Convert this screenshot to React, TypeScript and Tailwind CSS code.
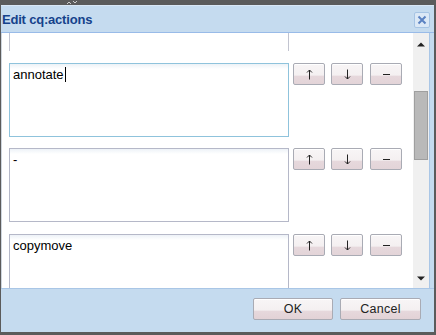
import React from "react";

function Glyph({ kind }: { kind: "up" | "down" | "minus" }) {
  if (kind === "minus") {
    return (
      <svg width="9" height="11" viewBox="0 0 9 11">
        <path d="M1 5.5 H8" stroke="#222" strokeWidth="1" />
      </svg>
    );
  }
  const d = kind === "up" ? "M4.5 1 V10.5 M2 3.5 L4.5 1 L7 3.5" : "M4.5 0.5 V10 M2 7.5 L4.5 10 L7 7.5";
  return (
    <svg width="9" height="11" viewBox="0 0 9 11">
      <path d={d} stroke="#222" strokeWidth="1" fill="none" />
    </svg>
  );
}

function SmallBtn({ kind }: { kind: "up" | "down" | "minus" }) {
  return (
    <div className="w-[32px] h-[22px] border border-[#a9abb4] rounded-[2px] bg-[linear-gradient(#f8f5f6_0%,#f4f0f1_55%,#e6d8dc_62%,#e3d4d8_100%)] flex items-center justify-center shadow-[inset_0_1px_0_#ffffff]">
      <div className="mt-[1px] flex">
        <Glyph kind={kind} />
      </div>
    </div>
  );
}

function Row({ text, focused, cursor, partial }: { text: string; focused?: boolean; cursor?: boolean; partial?: boolean }) {
  return (
    <div className="flex items-start h-[74px]">
      <div
        className={
          "w-[280px] h-[74px] border pl-[3px] pt-[3px] text-[13px] leading-[15px] text-black bg-[linear-gradient(#edf2f7_0px,#ffffff_5px)] " +
          (focused ? "border-[#8fc3dc]" : "border-[#b5b8c8]") +
          (partial ? " border-b-0 border-[#c2c4d0]" : "")
        }
      >
        {text && <span>{text}</span>}
        {cursor && <span className="inline-block w-[1px] h-[15px] bg-black align-top ml-[1px]" />}
      </div>
      {!partial && (
        <div className="ml-[4px] flex">
          <SmallBtn kind="up" />
          <div className="ml-[6px]">
            <SmallBtn kind="down" />
          </div>
          <div className="ml-[7px]">
            <SmallBtn kind="minus" />
          </div>
        </div>
      )}
    </div>
  );
}

function FooterBtn({ label, w }: { label: string; w: string }) {
  return (
    <div
      className={
        w +
        " h-[22px] border border-[#a9abb4] rounded-[2px] bg-[linear-gradient(#f8f5f6_0%,#f4f0f1_55%,#e6d8dc_62%,#e2d2d6_100%)] flex items-center justify-center text-[12.5px] text-[#222] tracking-[0.3px] shadow-[inset_0_1px_0_#ffffff]"
      }
    >
      {label}
    </div>
  );
}

export default function App() {
  return (
    <div className="w-[436px] h-[335px] bg-[#5b5b5b] flex flex-col font-['Liberation_Sans',Arial,sans-serif] overflow-hidden">
      <div className="h-[5px] relative">
        <svg className="absolute left-[66px] top-0" width="12" height="5" viewBox="0 0 12 5">
          <path d="M1 4 L3 2 L5 4" stroke="#cfcfcf" fill="none" strokeWidth="1" />
          <path d="M7 1 L9 3 L11 1" stroke="#cfcfcf" fill="none" strokeWidth="1" />
        </svg>
      </div>
      <div className="flex-1 flex flex-col ml-[1px] mr-[2px] mb-[3px] bg-[#c5dbef] border-t border-[#d9e7f5]">
        <div className="h-[26px] flex items-center justify-between pl-[1px] pr-[4px]">
          <span className="text-[13px] font-bold text-[#15428b] leading-none mt-[1px] tracking-[-0.2px]">Edit cq:actions</span>
          <div className="w-[16px] h-[16px] mt-[1px] border border-[#a6c4e4] rounded-[2px] bg-[#dbe8f6] flex items-center justify-center">
            <svg width="10" height="10" viewBox="0 0 10 10">
              <path d="M1.5 1.5 L8.5 8.5 M8.5 1.5 L1.5 8.5" stroke="#5b82c2" strokeWidth="2" />
            </svg>
          </div>
        </div>
        <div className="h-[256px] flex border-t border-[#99bbe8]">
          <div className="flex-1 bg-white border-l border-[#cfd6de] overflow-hidden">
            <div className="pl-[7px] mt-[-56px] flex flex-col gap-[11.5px]">
              <Row text="" partial />
              <Row text="annotate" focused cursor />
              <Row text="-" />
              <Row text="copymove" />
            </div>
          </div>
          <div className="w-[16px] bg-[#f0f0f0] flex flex-col items-center">
            <svg className="mt-[9px]" width="8" height="5" viewBox="0 0 8 5">
              <path d="M0 4.5 L4 0.5 L8 4.5 Z" fill="#222" />
            </svg>
            <div className="mt-[44px] w-[14px] h-[69px] bg-[#b9b9b9] border border-[#9f9f9f]" />
            <div className="flex-1" />
            <svg className="mb-[7px]" width="8" height="5" viewBox="0 0 8 5">
              <path d="M0 0.5 L4 4.5 L8 0.5 Z" fill="#222" />
            </svg>
          </div>
          <div className="w-[5px] border-l border-[#a9c6e6]" />
        </div>
        <div className="flex-1 border-t border-[#a9c6e6] flex justify-end items-start pt-[9px] pr-[13px] gap-[7px]">
          <FooterBtn label="OK" w="w-[80px]" />
          <FooterBtn label="Cancel" w="w-[81px]" />
        </div>
      </div>
    </div>
  );
}
